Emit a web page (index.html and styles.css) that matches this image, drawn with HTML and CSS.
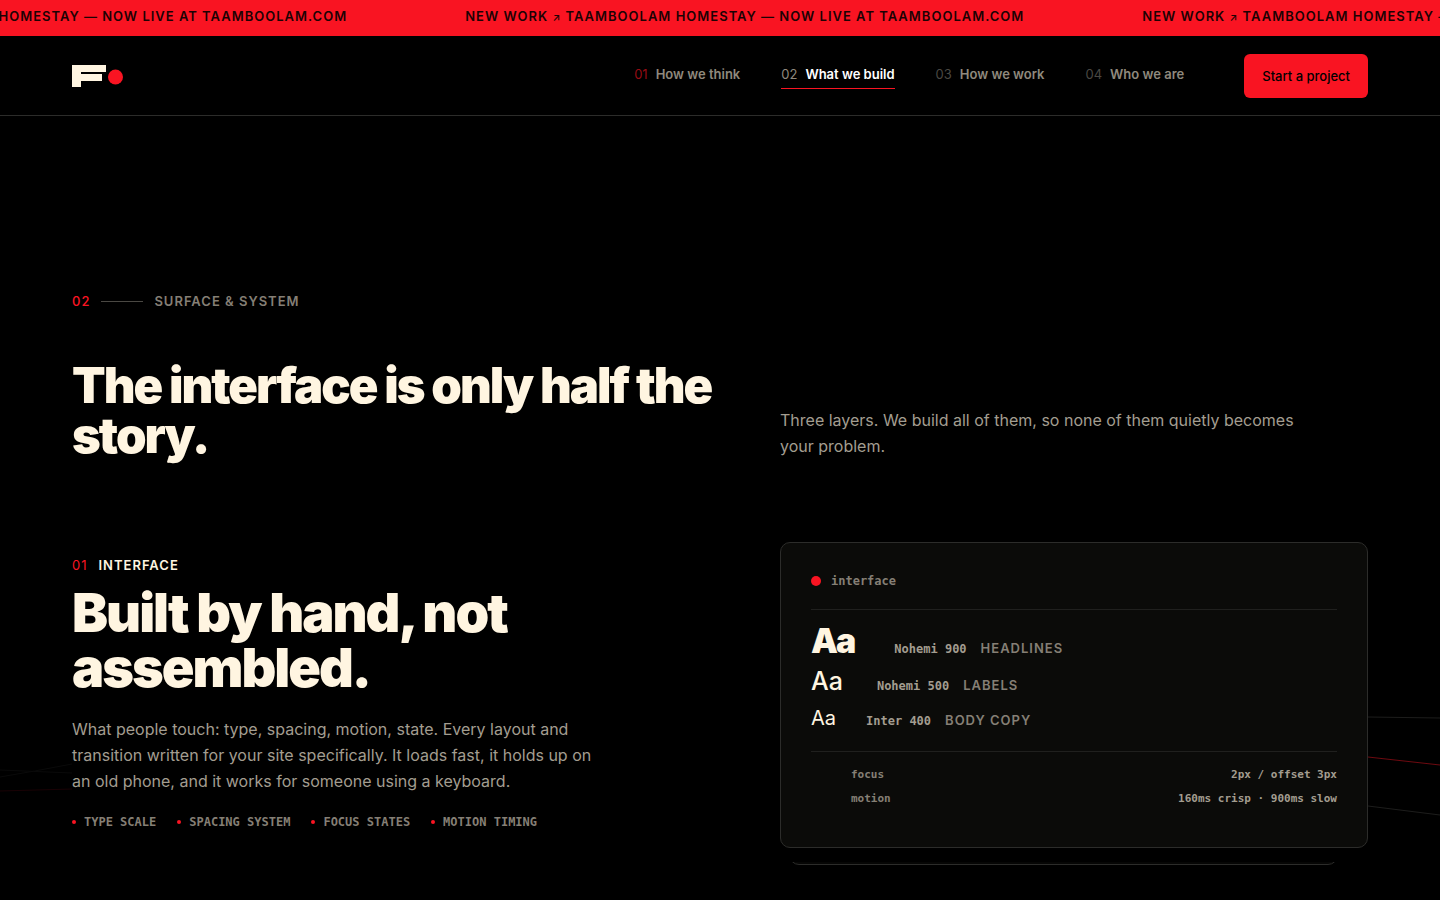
FILE: index.html
```html
<!DOCTYPE html>
<html lang="en">
<head>
	<meta charset="utf-8">
	<meta name="viewport" content="width=device-width, initial-scale=1">
	<title>What we build</title>
	<link rel="stylesheet" href="styles.css">
</head>
<body>
	<div class="ticker">
		<div class="ticker-track">
			<span>New work <i>↗</i> Taamboolam Homestay — now live at taamboolam.com</span>
			<span>New work <i>↗</i> Taamboolam Homestay — now live at taamboolam.com</span>
			<span>New work <i>↗</i> Taamboolam Homestay — now live at taamboolam.com</span>
		</div>
	</div>

	<header class="site-header">
		<a class="logo" href="#" aria-label="Home">
			<svg width="52" height="22" viewBox="0 0 52 22">
				<path fill="#fff5e1" d="M0 0h34v7H9v2h21v7H9v6H0z"/>
				<circle fill="#f91422" cx="43.500" cy="12" r="7.500"/>
			</svg>
		</a>
		<nav class="nav">
			<a class="seen" href="#think"><span>01</span>How we think</a>
			<a class="current" href="#build"><span>02</span>What we build</a>
			<a href="#work"><span>03</span>How we work</a>
			<a href="#who"><span>04</span>Who we are</a>
		</nav>
		<a class="cta" href="#start">Start a project</a>
	</header>

	<main id="build">
		<svg class="threads" viewBox="0 0 1440 784" preserveAspectRatio="none">
			<path class="faint" d="M0 661Q36 655 72 648M0 654L72 657"/>
			<path class="dim-red" d="M0 675L72 673"/>
			<path class="grey" d="M1368 601L1440 602M1368 690L1440 699"/>
			<path class="red" d="M1368 641L1440 649"/>
		</svg>

		<div class="wrap">
			<p class="eyebrow"><span>02</span><i></i>Surface &amp; System</p>

			<div class="columns intro">
				<h1>The interface is only half the story.</h1>
				<p class="copy">Three layers. We build all of them, so none of them quietly becomes your problem.</p>
			</div>

			<div class="columns">
				<section class="layer">
					<p class="layer-label"><span>01</span>Interface</p>
					<h2>Built by hand, not assembled.</h2>
					<p class="copy">What people touch: type, spacing, motion, state. Every layout and transition written for your site specifically. It loads fast, it holds up on an old phone, and it works for someone using a keyboard.</p>
					<ul class="tags">
						<li>Type scale</li>
						<li>Spacing system</li>
						<li>Focus states</li>
						<li>Motion timing</li>
					</ul>
				</section>

				<div class="stack">
					<div class="card">
						<p class="card-title">interface</p>
						<ul class="specimens">
							<li class="black"><b>Aa</b><code>Nohemi 900</code><span>Headlines</span></li>
							<li class="medium"><b>Aa</b><code>Nohemi 500</code><span>Labels</span></li>
							<li class="regular"><b>Aa</b><code>Inter 400</code><span>Body copy</span></li>
						</ul>
						<dl class="tokens">
							<div><dt>focus</dt><dd>2px / offset 3px</dd></div>
							<div><dt>motion</dt><dd>160ms crisp · 900ms slow</dd></div>
						</dl>
					</div>
					<div class="peek"><div class="next-card"></div></div>
				</div>
			</div>
		</div>
	</main>
</body>
</html>
```

FILE: styles.css
```css
:root {
	--red: #f91422;
	--cream: #fff5e1;
	--copy: #a39d90;
	--muted: #857f75;
	--line: #2c2c2a;
	--sans: Inter, "Liberation Sans", sans-serif;
	--mono: "DejaVu Sans Mono", "Liberation Mono", monospace;
}

* {
	box-sizing: border-box;
	margin: 0;
	padding: 0;
}

body {
	background: #000;
	color: var(--cream);
	font-family: var(--sans);
	overflow: hidden;
}

a {
	color: inherit;
	text-decoration: none;
}

ul {
	list-style: none;
}

/* ticker */
.ticker {
	height: 36px;
	overflow: hidden;
	background: var(--red);
	color: #1c0204;
}

.ticker-track {
	display: flex;
	gap: 118px;
	width: max-content;
	margin-left: -212px;
	font-size: 13px;
	font-weight: 600;
	line-height: 33px;
	letter-spacing: 1px;
	text-transform: uppercase;
}

.ticker i {
	font-style: normal;
	font-size: 10px;
}

/* header */
.site-header {
	display: flex;
	align-items: center;
	height: 80px;
	padding: 0 72px;
	border-bottom: 1px solid var(--line);
}

.logo {
	margin-right: auto;
}

.logo svg {
	display: block;
}

.nav {
	display: flex;
	gap: 41px;
	margin-right: 60px;
	color: #8f897d;
	font-size: 13px;
	font-weight: 600;
	line-height: 24px;
}

.nav a {
	padding-bottom: 2px;
	border-bottom: 1px solid transparent;
}

.nav span {
	margin-right: 8px;
	color: #4a4843;
	font-weight: 400;
}

.nav .seen span {
	color: #960c14;
}

.nav .current {
	border-color: var(--red);
	color: #fff;
}

.nav .current span {
	color: #8f897d;
}

.cta {
	padding: 0 18px;
	border-radius: 6px;
	background: var(--red);
	color: #000;
	font-size: 13px;
	font-weight: 500;
	line-height: 44px;
}

/* section */
main {
	position: relative;
	padding-top: 175px;
}

.threads {
	position: absolute;
	top: 0;
	left: 0;
	width: 100%;
	height: 784px;
	fill: none;
}

.faint { stroke: #0a0a0a; }
.dim-red { stroke: #1a0205; }
.grey { stroke: #1d1d1c; }
.red { stroke: #6e0a10; }

.wrap {
	position: relative;
	padding: 0 72px;
}

.eyebrow {
	display: flex;
	align-items: center;
	gap: 11px;
	color: var(--muted);
	font-size: 13px;
	font-weight: 600;
	line-height: 20px;
	letter-spacing: 1px;
	text-transform: uppercase;
}

.eyebrow span {
	color: var(--red);
	font-weight: 500;
}

.eyebrow i {
	width: 42px;
	height: 1px;
	background: #4a4843;
}

.columns {
	display: grid;
	grid-template-columns: 1fr 588px;
	column-gap: 48px;
}

.intro {
	align-items: end;
	margin: 50px 0 81px;
}

.intro .copy {
	padding-bottom: 2px;
}

h1,
h2 {
	font-weight: 900;
	letter-spacing: -2px;
}

h1 {
	font-size: 49px;
	line-height: 50px;
}

h2 {
	margin: 10px 0 21px;
	font-size: 54px;
	line-height: 55px;
}

.copy {
	max-width: 530px;
	color: var(--copy);
	font-size: 16px;
	line-height: 26px;
}

.layer {
	padding-top: 13px;
}

.layer-label {
	font-size: 13px;
	font-weight: 600;
	line-height: 20px;
	letter-spacing: 1px;
	text-transform: uppercase;
}

.layer-label span {
	margin-right: 11px;
	color: var(--red);
	font-weight: 400;
}

.tags {
	display: flex;
	gap: 21px;
	margin-top: 18px;
	color: var(--muted);
	font: 700 12px/20px var(--mono);
	text-transform: uppercase;
}

.tags li {
	display: flex;
	align-items: center;
	gap: 8px;
}

.tags li::before {
	content: "";
	width: 4px;
	height: 4px;
	border-radius: 50%;
	background: var(--red);
}

/* card */
.card {
	padding: 28px 30px 36px;
	border: 1px solid var(--line);
	border-radius: 10px;
	background: #0b0b09;
}

.card-title {
	display: flex;
	align-items: center;
	gap: 10px;
	padding-bottom: 18px;
	border-bottom: 1px solid #20201e;
	color: var(--muted);
	font: 700 12px/20px var(--mono);
}

.card-title::before {
	content: "";
	width: 10px;
	height: 10px;
	border-radius: 50%;
	background: var(--red);
}

.specimens {
	padding: 12px 0 14px;
	border-bottom: 1px solid #20201e;
}

.specimens li {
	display: flex;
	align-items: baseline;
	height: 37px;
	line-height: 37px;
}

.specimens li:first-child {
	height: 41px;
}

.specimens code {
	margin-right: 14px;
	color: var(--copy);
	font: 700 12px/20px var(--mono);
}

.specimens span {
	color: var(--muted);
	font-size: 13px;
	font-weight: 600;
	text-transform: uppercase;
	letter-spacing: 1px;
}

.black b {
	margin-right: 40px;
	font-size: 34px;
	font-weight: 900;
	letter-spacing: -2px;
}

.medium b {
	margin-right: 34px;
	font-size: 25px;
	font-weight: 500;
}

.regular b {
	margin-right: 30px;
	font-size: 20px;
	font-weight: 400;
}

.tokens {
	padding: 11px 0 0 40px;
	font: 700 11px/24px var(--mono);
}

.tokens div {
	display: flex;
	justify-content: space-between;
}

.tokens dt {
	color: var(--muted);
}

.tokens dd {
	color: var(--copy);
}

/* only the bottom edge of the card behind shows */
.peek {
	display: flex;
	align-items: flex-end;
	height: 3px;
	margin: 14px 30px 0 9px;
	overflow: hidden;
}

.next-card {
	flex: 1;
	height: 30px;
	border: 1px solid var(--line);
	border-radius: 10px;
	background: #060605;
}
```
